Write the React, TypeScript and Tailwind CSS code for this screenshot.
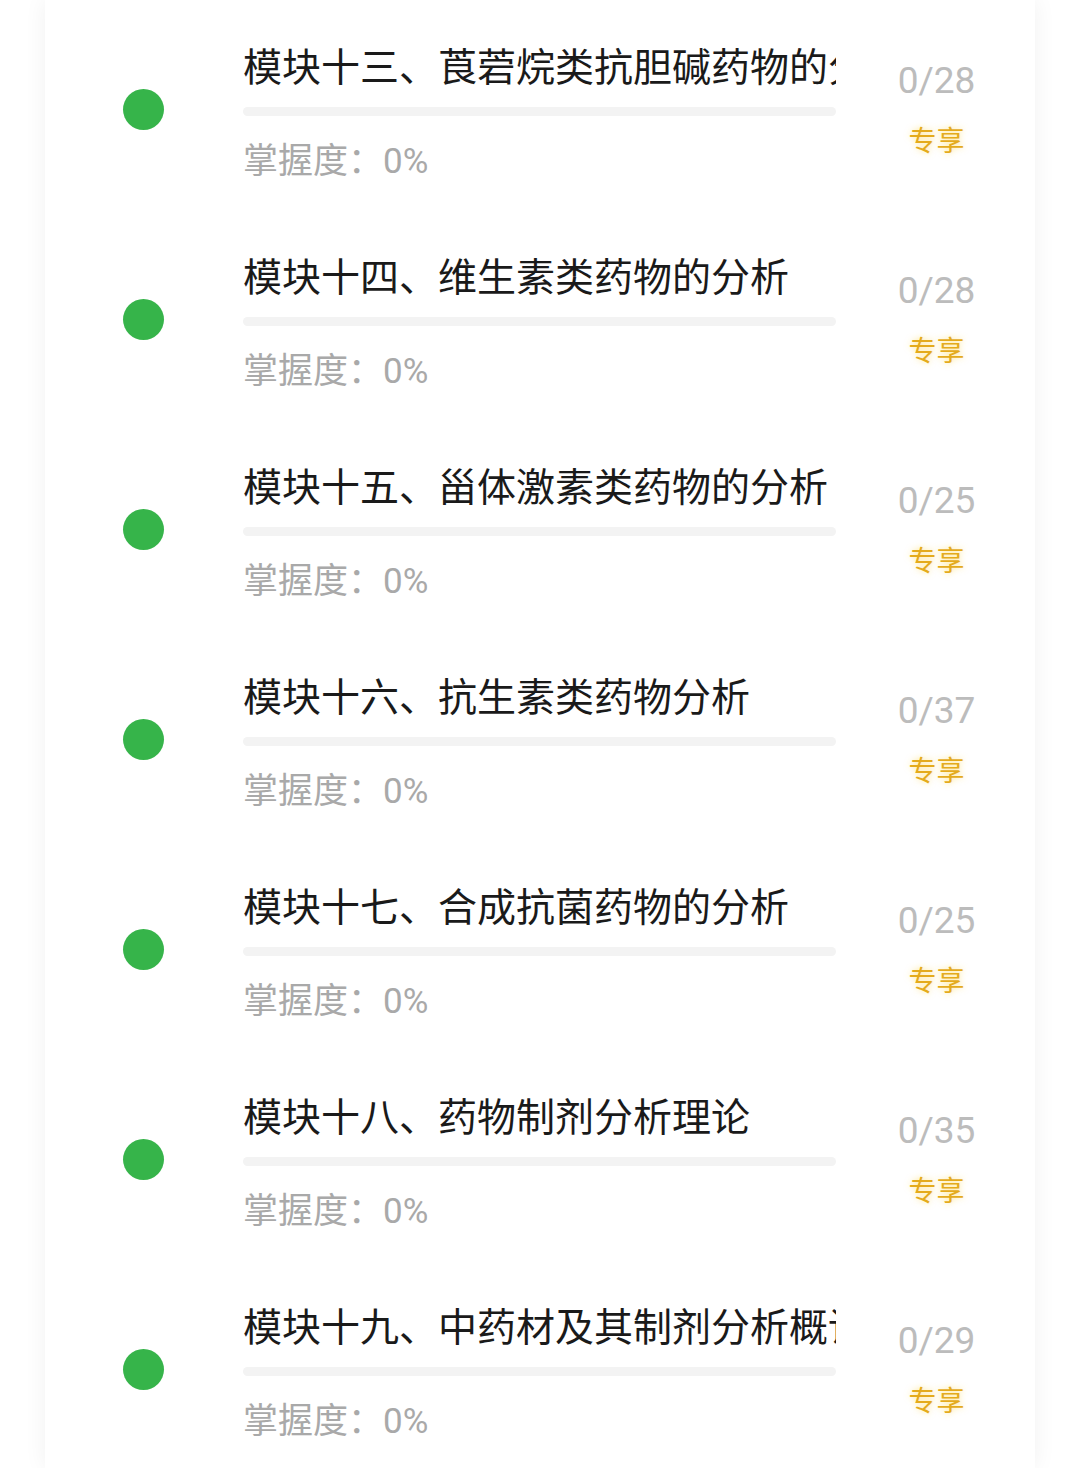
const modules = [
  { title: '模块十三、莨菪烷类抗胆碱药物的分析', total: 28 },
  { title: '模块十四、维生素类药物的分析', total: 28 },
  { title: '模块十五、甾体激素类药物的分析', total: 25 },
  { title: '模块十六、抗生素类药物分析', total: 37 },
  { title: '模块十七、合成抗菌药物的分析', total: 25 },
  { title: '模块十八、药物制剂分析理论', total: 35 },
  { title: '模块十九、中药材及其制剂分析概论', total: 29 },
];

const cjk = "font-['Noto_Sans_CJK_SC','Noto_Sans',sans-serif]";

function ModuleRow({ title, total }: { title: string; total: number }) {
  return (
    <div className="flex h-[210px] shrink-0">
      <div className="flex w-[198px] items-center pl-[78px]">
        <div className="h-[41px] w-[41px] rounded-full bg-[#36b44a]" />
      </div>
      <div className="flex w-[593px] flex-col pt-[34px]">
        {/* titles are clipped at the bar's end in the app, no ellipsis */}
        <div className={`h-[52px] overflow-x-clip whitespace-nowrap text-[39px] leading-[52px] text-[#1a1a1a] ${cjk}`}>
          {title}
        </div>
        <div className="mt-[17px] h-[9px] w-full rounded-full bg-[#f3f3f3]" />
        <div className={`mt-[20px] h-[44px] text-[35px] leading-[44px] text-[#a9a9a9] ${cjk}`}>
          掌握度：<span className="font-['Roboto',sans-serif]">0%</span>
        </div>
      </div>
      <div className="flex flex-1 flex-col items-center pt-[55px] pl-[2px]">
        <div className="h-[44px] font-['Roboto',sans-serif] text-[37px] leading-[44px] text-[#bcbcbc]">
          0/{total}
        </div>
        <div className={`mt-[18px] h-[36px] text-[28px] leading-[36px] text-[#e4ab1c] [text-shadow:0_0_6px_rgba(255,205,40,0.55)] ${cjk}`}>
          专享
        </div>
      </div>
    </div>
  );
}

export default function App() {
  return (
    <div className="h-[1468px] w-[1080px] overflow-hidden bg-white">
      <div className="mx-[45px] flex h-full flex-col bg-white pt-[4px] shadow-[0_0_22px_rgba(0,0,0,0.06)]">
        {modules.map((m) => (
          <ModuleRow key={m.title} title={m.title} total={m.total} />
        ))}
      </div>
    </div>
  );
}
